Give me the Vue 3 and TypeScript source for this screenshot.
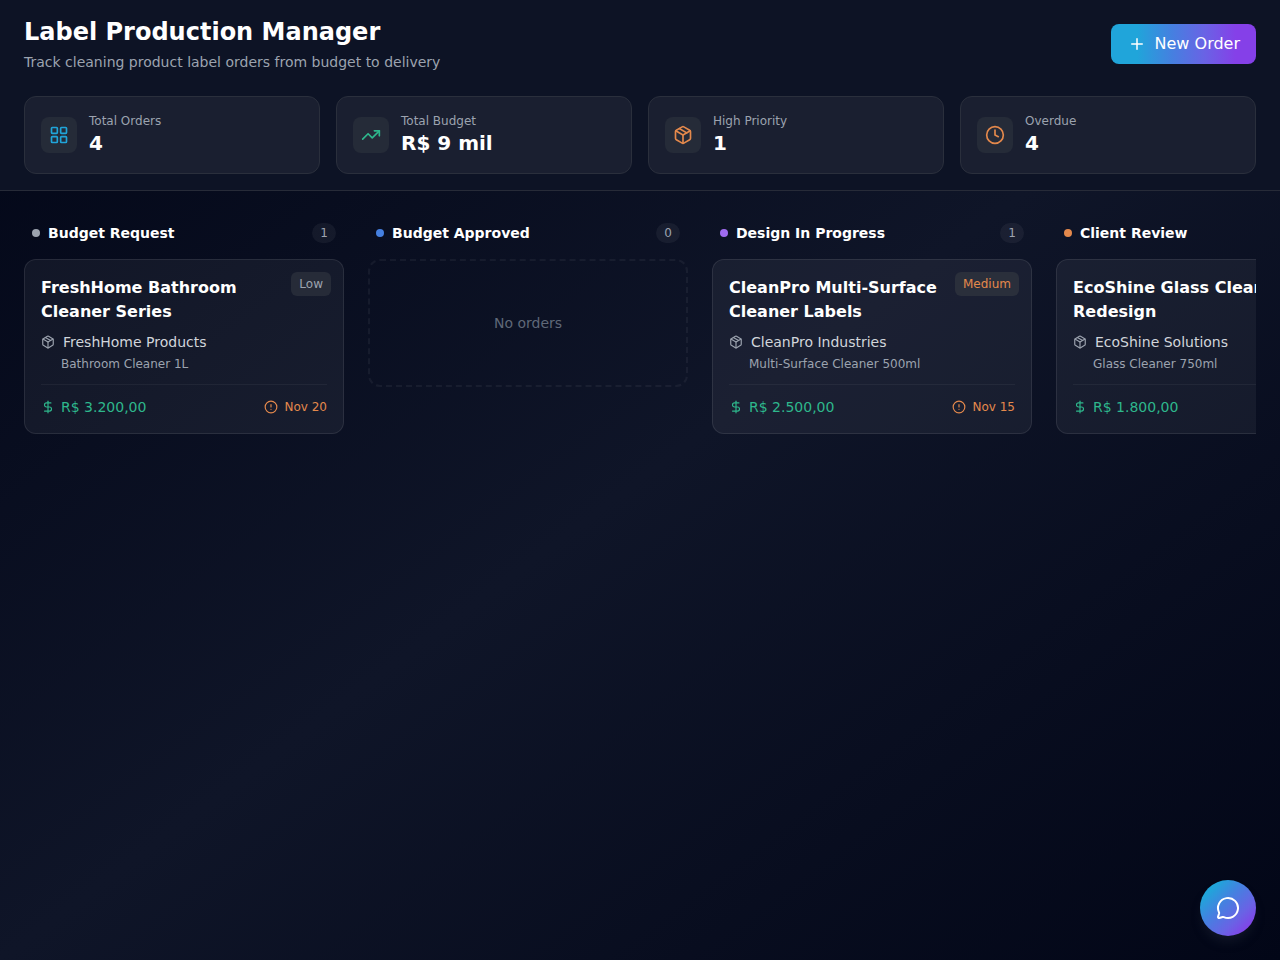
<script setup lang="ts">
interface Order {
  title: string
  client: string
  product: string
  budget: string
  due: string
  priority: 'Low' | 'Medium' | 'High'
}

interface Column {
  name: string
  tone: string
  orders: Order[]
}

const stats = [
  { label: 'Total Orders', value: '4', icon: 'grid' },
  { label: 'Total Budget', value: 'R$ 9 mil', icon: 'trend' },
  { label: 'High Priority', value: '1', icon: 'box' },
  { label: 'Overdue', value: '4', icon: 'clock' },
]

const columns: Column[] = [
  {
    name: 'Budget Request',
    tone: 'gray',
    orders: [
      {
        title: 'FreshHome Bathroom Cleaner Series',
        client: 'FreshHome Products',
        product: 'Bathroom Cleaner 1L',
        budget: 'R$ 3.200,00',
        due: 'Nov 20',
        priority: 'Low',
      },
    ],
  },
  { name: 'Budget Approved', tone: 'blue', orders: [] },
  {
    name: 'Design In Progress',
    tone: 'purple',
    orders: [
      {
        title: 'CleanPro Multi-Surface Cleaner Labels',
        client: 'CleanPro Industries',
        product: 'Multi-Surface Cleaner 500ml',
        budget: 'R$ 2.500,00',
        due: 'Nov 15',
        priority: 'Medium',
      },
    ],
  },
  {
    name: 'Client Review',
    tone: 'orange',
    orders: [
      {
        title: 'EcoShine Glass Cleaner Redesign',
        client: 'EcoShine Solutions',
        product: 'Glass Cleaner 750ml',
        budget: 'R$ 1.800,00',
        due: 'Nov 10',
        priority: 'High',
      },
    ],
  },
]
</script>

<template>
  <div class="page">
    <header class="top">
      <div class="top-row">
        <div>
          <h1>Label Production Manager</h1>
          <p class="subtitle">Track cleaning product label orders from budget to delivery</p>
        </div>
        <button class="new-order" type="button">
          <svg class="icon" width="18" height="18" viewBox="0 0 24 24"><path d="M5 12h14M12 5v14" /></svg>
          <span>New Order</span>
        </button>
      </div>

      <div class="stats">
        <div v-for="s in stats" :key="s.label" class="stat">
          <div class="chip" :class="s.icon">
            <svg class="icon" width="20" height="20" viewBox="0 0 24 24">
              <template v-if="s.icon === 'grid'">
                <rect x="3" y="3" width="7" height="7" rx="1" />
                <rect x="14" y="3" width="7" height="7" rx="1" />
                <rect x="14" y="14" width="7" height="7" rx="1" />
                <rect x="3" y="14" width="7" height="7" rx="1" />
              </template>
              <template v-else-if="s.icon === 'trend'">
                <path d="M16 7h6v6" />
                <path d="m22 7-8.500 8.500-5-5L2 17" />
              </template>
              <template v-else-if="s.icon === 'box'">
                <path d="M11 21.730a2 2 0 0 0 2 0l7-4A2 2 0 0 0 21 16V8a2 2 0 0 0-1-1.730l-7-4a2 2 0 0 0-2 0l-7 4A2 2 0 0 0 3 8v8a2 2 0 0 0 1 1.730z" />
                <path d="M12 22V12" />
                <path d="M3.290 7 12 12l8.710-5" />
                <path d="m7.500 4.270 9 5.150" />
              </template>
              <template v-else>
                <circle cx="12" cy="12" r="10" />
                <path d="M12 6v6l4 2" />
              </template>
            </svg>
          </div>
          <div>
            <div class="stat-label">{{ s.label }}</div>
            <div class="stat-value">{{ s.value }}</div>
          </div>
        </div>
      </div>
    </header>

    <main class="board">
      <section v-for="c in columns" :key="c.name" class="column">
        <div class="column-head">
          <span class="dot" :class="c.tone"></span>
          <h2>{{ c.name }}</h2>
          <span class="count">{{ c.orders.length }}</span>
        </div>

        <article v-for="o in c.orders" :key="o.title" class="card">
          <span class="badge" :class="o.priority.toLowerCase()">{{ o.priority }}</span>
          <h3>{{ o.title }}</h3>
          <div class="client">
            <svg class="icon" width="14" height="14" viewBox="0 0 24 24">
              <path d="M11 21.730a2 2 0 0 0 2 0l7-4A2 2 0 0 0 21 16V8a2 2 0 0 0-1-1.730l-7-4a2 2 0 0 0-2 0l-7 4A2 2 0 0 0 3 8v8a2 2 0 0 0 1 1.730z" />
              <path d="M12 22V12" />
              <path d="M3.290 7 12 12l8.710-5" />
              <path d="m7.500 4.270 9 5.150" />
            </svg>
            <span>{{ o.client }}</span>
          </div>
          <div class="product">{{ o.product }}</div>
          <div class="card-foot">
            <div class="budget">
              <svg class="icon" width="14" height="14" viewBox="0 0 24 24">
                <path d="M12 2v20" />
                <path d="M17 5H9.500a3.500 3.500 0 0 0 0 7h5a3.500 3.500 0 0 1 0 7H6" />
              </svg>
              <span>{{ o.budget }}</span>
            </div>
            <div class="due">
              <svg class="icon" width="14" height="14" viewBox="0 0 24 24">
                <circle cx="12" cy="12" r="10" />
                <path d="M12 8v4M12 16h.01" />
              </svg>
              <span>{{ o.due }}</span>
            </div>
          </div>
        </article>

        <div v-if="!c.orders.length" class="empty">No orders</div>
      </section>
    </main>

    <button class="chat" type="button" aria-label="Open chat">
      <svg class="icon" width="24" height="24" viewBox="0 0 24 24">
        <path d="M2.992 16.342a2 2 0 0 1 .094 1.167l-1.065 3.290a1 1 0 0 0 1.236 1.168l3.413-.998a2 2 0 0 1 1.099.092 10 10 0 1 0-4.777-4.719" />
      </svg>
    </button>
  </div>
</template>

<style>
body {
  margin: 0;
  background: #020617;
}
</style>

<style scoped>
* {
  box-sizing: border-box;
}

.page {
  display: flex;
  flex-direction: column;
  height: 960px;
  overflow: hidden;
  font-family: 'DejaVu Sans', sans-serif;
  color: #fff;
  background: linear-gradient(to bottom right, #020617, #0f1528, #020617);
}

h1,
h2,
h3,
p {
  margin: 0;
}

button {
  border: 0;
  padding: 0;
  font: inherit;
  color: #fff;
}

.icon {
  display: block;
  flex: none;
  fill: none;
  stroke: currentColor;
  stroke-width: 2;
  stroke-linecap: round;
  stroke-linejoin: round;
}

.top {
  padding: 16px 24px;
  background: #0d1325;
  border-bottom: 1px solid #272b38;
}

.top-row {
  display: flex;
  justify-content: space-between;
  align-items: center;
  margin-bottom: 24px;
}

h1 {
  font-size: 24px;
  line-height: 32px;
  font-weight: 700;
}

.subtitle {
  margin-top: 4px;
  font-size: 14px;
  line-height: 20px;
  color: #9ca3af;
}

.new-order {
  display: flex;
  align-items: center;
  gap: 8px;
  height: 40px;
  padding: 0 16px;
  border-radius: 8px;
  font-size: 16px;
  line-height: 24px;
  background: linear-gradient(to right, #20a5da 18%, #4580e0 42%, #6a62e5 65%, #8540e8 86%);
}

.new-order .icon {
  margin: 0 1px;
}

.stats {
  display: grid;
  grid-template-columns: repeat(4, 1fr);
  gap: 16px;
}

.stat {
  display: flex;
  align-items: center;
  gap: 12px;
  padding: 16px;
  border: 1px solid #2a2f3c;
  border-radius: 12px;
  background: #1a1f30;
}

.chip {
  padding: 8px;
  border-radius: 8px;
  background: #252b38;
}

.chip.grid {
  color: #20a5da;
}

.chip.trend {
  color: #2eb78c;
}

.chip.box,
.chip.clock {
  color: #e4894c;
}

.stat-label {
  font-size: 12px;
  line-height: 16px;
  color: #9ca3af;
}

.stat-value {
  font-size: 20px;
  line-height: 28px;
  font-weight: 700;
}

.board {
  flex: 1;
  display: flex;
  align-items: flex-start;
  gap: 24px;
  margin: 32px 24px 24px;
  overflow: hidden;
}

.column {
  flex: 0 0 320px;
}

.column-head {
  display: flex;
  align-items: center;
  gap: 8px;
  padding: 0 8px;
  margin-bottom: 16px;
}

.dot {
  width: 8px;
  height: 8px;
  border-radius: 50%;
}

.dot.gray {
  background: #9ca3af;
}

.dot.blue {
  background: #4580e0;
}

.dot.purple {
  background: #a06cf0;
}

.dot.orange {
  background: #e4894c;
}

h2 {
  font-size: 14px;
  line-height: 20px;
  font-weight: 600;
}

.count {
  margin-left: auto;
  padding: 2px 8px;
  border-radius: 10px;
  font-size: 12px;
  line-height: 16px;
  color: #9ca3af;
  background: rgba(255, 255, 255, 0.05);
}

.card {
  position: relative;
  padding: 16px;
  border: 1px solid rgba(255, 255, 255, 0.09);
  border-radius: 12px;
  background: rgba(255, 255, 255, 0.05);
}

.badge {
  position: absolute;
  top: 12px;
  right: 12px;
  padding: 4px 8px;
  border-radius: 6px;
  font-size: 12px;
  line-height: 16px;
  background: #2a2f3b;
}

.badge.low {
  color: #9ca3af;
  background: #262b38;
}

.badge.medium,
.badge.high {
  color: #e4894c;
}

h3 {
  margin-bottom: 8px;
  padding-right: 64px;
  font-size: 16px;
  line-height: 24px;
  font-weight: 600;
}

.client {
  display: flex;
  align-items: center;
  gap: 8px;
  margin-bottom: 4px;
  font-size: 14px;
  line-height: 20px;
  color: #d1d5db;
}

.client .icon {
  color: #9ca3af;
}

.product {
  padding-left: 20px;
  font-size: 12px;
  line-height: 16px;
  color: #9ca3af;
}

.card-foot {
  display: flex;
  justify-content: space-between;
  align-items: center;
  margin-top: 12px;
  padding-top: 12px;
  border-top: 1px solid rgba(255, 255, 255, 0.05);
}

.budget,
.due {
  display: flex;
  align-items: center;
  gap: 6px;
}

.budget {
  font-size: 14px;
  line-height: 20px;
  color: #2eb78c;
}

.due {
  font-size: 12px;
  line-height: 16px;
  color: #e4894c;
}

.empty {
  display: flex;
  align-items: center;
  justify-content: center;
  height: 128px;
  border: 2px dashed rgba(255, 255, 255, 0.05);
  border-radius: 12px;
  font-size: 14px;
  line-height: 20px;
  color: #5f6878;
}

.chat {
  position: fixed;
  right: 24px;
  bottom: 24px;
  display: flex;
  align-items: center;
  justify-content: center;
  width: 56px;
  height: 56px;
  border-radius: 50%;
  background: linear-gradient(to bottom right, #20a5da 18%, #4580e0 42%, #6a62e5 68%, #8540e8 88%);
  box-shadow: 0 8px 12px -3px rgba(40, 48, 65, 0.4);
}
</style>
